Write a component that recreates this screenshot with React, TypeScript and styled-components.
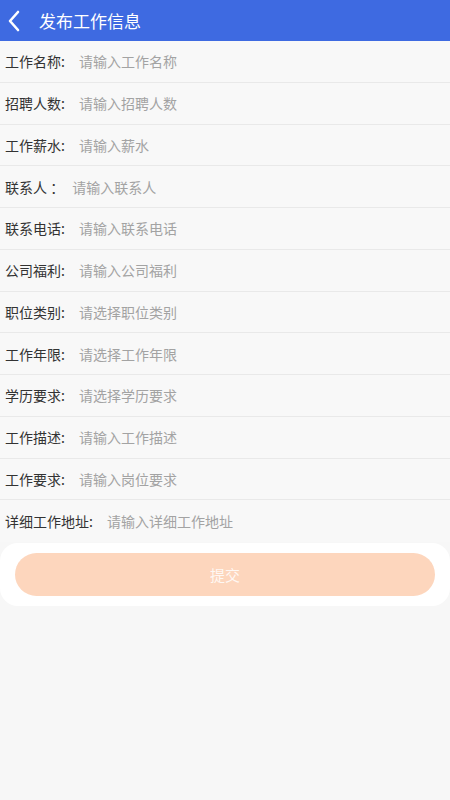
import React from "react";
import styled, { createGlobalStyle } from "styled-components";

const Global = createGlobalStyle`
  html, body { margin: 0; padding: 0; background: #f7f7f7; }
  body { font-family: "Noto Sans CJK SC", "Noto Sans", sans-serif; }
  * { box-sizing: border-box; }
`;

const Page = styled.div`
  width: 450px;
  min-height: 800px;
  background: #f7f7f7;
  display: flex;
  flex-direction: column;
`;

const Header = styled.header`
  height: 41px;
  background: #3e6ae1;
  display: flex;
  align-items: center;
  padding-left: 7px;
  gap: 16px;
`;

const BackBtn = styled.span`
  display: flex;
  align-items: center;
  width: 16px;
  height: 24px;
`;

const Title = styled.h1`
  margin: 0;
  font-size: 17px;
  font-weight: 400;
  color: #ffffff;
  line-height: 1;
`;

const Form = styled.div`
  display: flex;
  flex-direction: column;
  background: #f8f8f8;
`;

const Row = styled.div<{ $last?: boolean }>`
  height: 41.75px;
  display: flex;
  align-items: center;
  padding-left: 5px;
  border-bottom: ${(p) => (p.$last ? "none" : "1px solid #e9e9e9")};
`;

const Label = styled.span<{ $gap: number }>`
  font-size: 14px;
  color: #333333;
  margin-right: ${(p) => p.$gap}px;
  white-space: nowrap;
`;

const Placeholder = styled.span`
  font-size: 14px;
  color: #a3a3a3;
  white-space: nowrap;
`;

const Card = styled.div`
  margin-top: 1px;
  background: #ffffff;
  border-radius: 18px;
  padding: 10px 15px;
  height: 63px;
`;

const Submit = styled.button`
  width: 100%;
  height: 43px;
  border: none;
  border-radius: 22px;
  background: #fdd6bd;
  color: rgba(255, 255, 255, 0.85);
  font-size: 15px;
  font-family: inherit;
  padding: 0;
`;

const fields: { label: string; ph: string; gap: number }[] = [
  { label: "工作名称:", ph: "请输入工作名称", gap: 14 },
  { label: "招聘人数:", ph: "请输入招聘人数", gap: 14 },
  { label: "工作薪水:", ph: "请输入薪水", gap: 14 },
  { label: "联系人 ：", ph: "请输入联系人", gap: 8 },
  { label: "联系电话:", ph: "请输入联系电话", gap: 14 },
  { label: "公司福利:", ph: "请输入公司福利", gap: 14 },
  { label: "职位类别:", ph: "请选择职位类别", gap: 14 },
  { label: "工作年限:", ph: "请选择工作年限", gap: 14 },
  { label: "学历要求:", ph: "请选择学历要求", gap: 14 },
  { label: "工作描述:", ph: "请输入工作描述", gap: 14 },
  { label: "工作要求:", ph: "请输入岗位要求", gap: 14 },
  { label: "详细工作地址:", ph: "请输入详细工作地址", gap: 14 },
];

export default function App() {
  return (
    <Page>
      <Global />
      <Header>
        <BackBtn>
          <svg width="14" height="22" viewBox="0 0 14 22">
            <path d="M11 2 L3 11 L11 20" fill="none" stroke="#fff" strokeWidth="2.6" strokeLinecap="round" strokeLinejoin="round" />
          </svg>
        </BackBtn>
        <Title>发布工作信息</Title>
      </Header>
      <Form>
        {fields.map((f, i) => (
          <Row key={f.label} $last={i === fields.length - 1}>
            <Label $gap={f.gap}>{f.label}</Label>
            <Placeholder>{f.ph}</Placeholder>
          </Row>
        ))}
      </Form>
      <Card>
        <Submit>提交</Submit>
      </Card>
    </Page>
  );
}
